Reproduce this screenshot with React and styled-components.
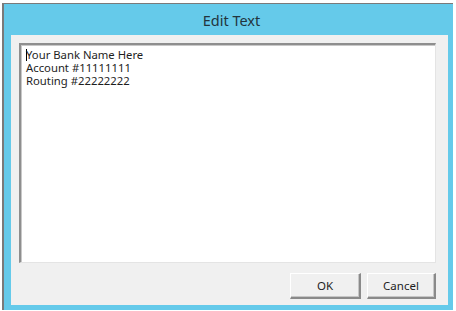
import React from 'react';
import styled, { createGlobalStyle } from 'styled-components';

const GlobalStyle = createGlobalStyle`
  html, body {
    margin: 0;
    padding: 0;
    background: #ffffff;
  }
  body {
    width: 456px;
    height: 311px;
    overflow: hidden;
  }
`;

const Page = styled.div`
  padding: 3px 0 0 2px;
`;

const Window = styled.div`
  width: 451px;
  height: 307px;
  box-sizing: border-box;
  border-top: 1px solid #7a7a7a;
  border-left: 2px solid #7a7a7a;
  background: #65caea;
  display: flex;
  flex-direction: column;
  padding: 0 5px 5px 7px;
`;

const TitleBar = styled.div`
  height: 31px;
  display: flex;
  align-items: center;
  justify-content: center;
  font-family: 'Noto Sans', 'Open Sans', sans-serif;
  font-size: 14.5px;
  color: #23353d;
  padding: 1px 0 0 4px;
  box-sizing: border-box;
`;

const Body = styled.div`
  flex: 1;
  background: #f0f0f0;
  display: flex;
  flex-direction: column;
  padding: 8px 12px 6px 8px;
  gap: 10px;
`;

const TextBox = styled.div`
  height: 220px;
  box-sizing: border-box;
  background: #ffffff;
  border-top: 2px solid #8e8e8e;
  border-left: 2px solid #8e8e8e;
  border-right: 1px solid #e4e4e4;
  border-bottom: 1px solid #e4e4e4;
  box-shadow: inset 1px 1px 0 #c8c8c8;
  padding: 3px 5px;
  font-family: 'Noto Sans', 'Open Sans', sans-serif;
  font-size: 11.3px;
  line-height: 13px;
  color: #1e1e1e;
  white-space: pre;
`;

const Caret = styled.span`
  display: inline-block;
  width: 1px;
  height: 12px;
  background: #000;
  vertical-align: -2px;
  margin: 0 -1px 0 0;
`;

const ButtonRow = styled.div`
  display: flex;
  justify-content: flex-end;
  gap: 6px;
`;

const Button = styled.button`
  width: ${(p) => p.$width}px;
  height: 26px;
  box-sizing: border-box;
  margin: 0;
  padding: 0;
  background: #f0f0f0;
  border-top: 1px solid #ffffff;
  border-left: 1px solid #ffffff;
  border-right: 2px solid #8a8a8a;
  border-bottom: 2px solid #8a8a8a;
  box-shadow: inset -1px -1px 0 #c6c6c6;
  font-family: 'Noto Sans', 'Open Sans', sans-serif;
  font-size: 11.5px;
  color: #1e1e1e;
`;

export default function App() {
  return (
    <>
      <GlobalStyle />
      <Page>
        <Window>
          <TitleBar>Edit Text</TitleBar>
          <Body>
            <TextBox>
              <Caret />
              {'Your Bank Name Here\nAccount #11111111\nRouting #22222222'}
            </TextBox>
            <ButtonRow>
              <Button $width={71}>OK</Button>
              <Button $width={69}>Cancel</Button>
            </ButtonRow>
          </Body>
        </Window>
      </Page>
    </>
  );
}
